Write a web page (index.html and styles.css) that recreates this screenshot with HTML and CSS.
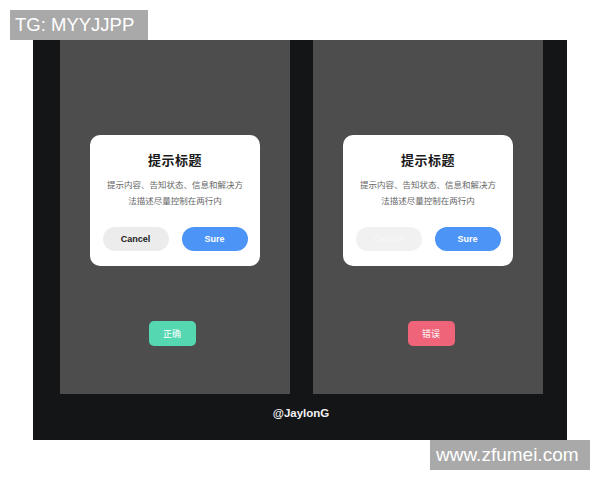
FILE: index.html
```html
<!DOCTYPE html>
<html>
<head>
<meta charset="utf-8">
<link rel="stylesheet" href="styles.css">
</head>
<body>
<div class="tag tag-top">TG: MYYJJPP</div>
<div class="panel">
  <div class="screens">
    <div class="screen">
      <div class="dialog">
        <div class="title">提示标题</div>
        <div class="desc">提示内容、告知状态、信息和解决方<br>法描述尽量控制在两行内</div>
        <div class="actions">
          <div class="btn btn-cancel">Cancel</div>
          <div class="btn btn-sure">Sure</div>
        </div>
      </div>
      <div class="chip chip-ok">正确</div>
    </div>
    <div class="screen">
      <div class="dialog">
        <div class="title">提示标题</div>
        <div class="desc">提示内容、告知状态、信息和解决方<br>法描述尽量控制在两行内</div>
        <div class="actions">
          <div class="btn btn-disabled">Cancel</div>
          <div class="btn btn-sure">Sure</div>
        </div>
      </div>
      <div class="chip chip-err">错误</div>
    </div>
  </div>
  <div class="credit">@JaylonG</div>
</div>
<div class="bottom-row">
  <div class="tag tag-bottom">www.zfumei.com</div>
</div>
</body>
</html>
```
FILE: styles.css
```css
* { box-sizing: border-box; }
html, body { margin: 0; padding: 0; background: #ffffff; }
body {
  width: 600px;
  height: 480px;
  overflow: hidden;
  font-family: "Noto Sans CJK SC", "Noto Sans", sans-serif;
}
.tag {
  background: #a9a9a9;
  color: #ffffff;
  font-family: "Liberation Sans", Arial, sans-serif;
  height: 30px;
  line-height: 30px;
}
.tag-top {
  margin: 10px 0 0 10px;
  width: 138px;
  padding-left: 5px;
  font-size: 18.5px;
}
.panel {
  margin-left: 33px;
  width: 534px;
  height: 400px;
  background: #141517;
  display: flex;
  flex-direction: column;
}
.screens {
  display: flex;
  gap: 23px;
  padding-left: 27px;
}
.screen {
  width: 230px;
  height: 354px;
  background: #4d4d4d;
  display: flex;
  flex-direction: column;
  align-items: center;
  padding-top: 95px;
}
.dialog {
  width: 170px;
  height: 131px;
  background: #ffffff;
  border-radius: 10px;
  display: flex;
  flex-direction: column;
  align-items: center;
  padding-top: 15px;
}
.title {
  font-size: 13px;
  font-weight: 700;
  color: #1a1a1a;
  line-height: 20px;
  letter-spacing: 0.5px;
}
.desc {
  margin-top: 6px;
  font-size: 8.5px;
  color: #666666;
  line-height: 16px;
  text-align: center;
}
.actions {
  margin-top: 19px;
  display: flex;
  gap: 13px;
}
.btn {
  width: 66px;
  height: 24px;
  border-radius: 12px;
  font-family: "Liberation Sans", Arial, sans-serif;
  font-size: 9px;
  font-weight: 700;
  line-height: 24px;
  text-align: center;
}
.btn-cancel { background: #ececec; color: #222222; }
.btn-disabled { background: #f1f1f1; color: #f6f6f6; }
.btn-sure { background: #4c94f6; color: #ffffff; }
.chip {
  margin-top: 55px;
  width: 47px;
  height: 25px;
  border-radius: 5px;
  color: #ffffff;
  font-size: 9px;
  line-height: 25px;
  text-align: center;
}
.chip-ok { background: #55d7b1; margin-right: 6px; }
.chip-err { background: #f06479; margin-left: 6px; }
.credit {
  margin-top: 11px;
  text-align: center;
  color: #f2f2f2;
  font-family: "Liberation Sans", Arial, sans-serif;
  font-size: 11.5px;
  font-weight: 700;
  line-height: 16px;
  padding-left: 2px;
}
.bottom-row {
  display: flex;
  justify-content: flex-end;
  padding-right: 10px;
}
.tag-bottom {
  width: 160px;
  padding-left: 6px;
  font-size: 19px;
}
```
